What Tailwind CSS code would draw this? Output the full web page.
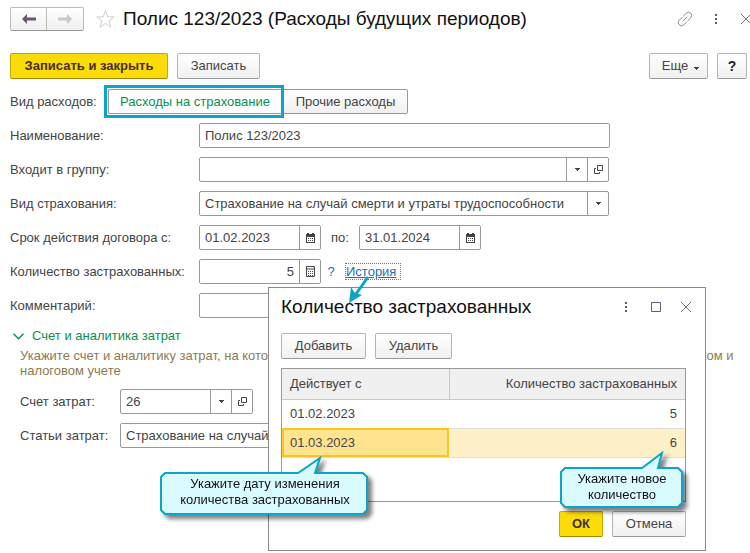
<!DOCTYPE html>
<html lang="ru">
<head>
    <meta charset="UTF-8">
    <meta name="viewport" content="width=device-width, initial-scale=1.0">
    <script src="https://cdn.jsdelivr.net/npm/@tailwindcss/browser@4"></script>
    <title>Полис 123/2023 (Расходы будущих периодов)</title>
</head>
<body class="relative min-h-screen overflow-hidden bg-white font-['Liberation_Sans',Arial,sans-serif] text-[13px] text-[#444]">

    <!-- Icons used more than once -->
    <svg class="hidden">
        <symbol id="caret" viewBox="0 0 5 3"><path d="M0 0h5v1h-1v1h-1v1h-1v-1h-1v-1h-1z" fill="#444"/></symbol>
        <symbol id="open" viewBox="0 0 9 9"><path d="M3.5 .5h5v5h-5zM2 3.5H.5v5h5V7" fill="none" stroke="#444"/></symbol>
        <symbol id="calendar" viewBox="0 0 9 10">
            <path d="M0 1h1V0h2v1h3V0h2v1h1v9H0z" fill="#444"/>
            <path d="M1 4h7v5H1z" fill="#fff"/>
            <path d="M2 5.5h5M2 7.5h5" stroke="#444" stroke-dasharray="1 1"/>
        </symbol>
        <symbol id="dots" viewBox="0 0 2 10"><path d="M0 0h2v2H0zM0 4h2v2H0zM0 8h2v2H0z" fill="#6b5577"/></symbol>
        <symbol id="close" viewBox="0 0 10 10"><path d="M0 0l10 10M10 0L0 10" fill="none" stroke="#777"/></symbol>
    </svg>

    <!-- Title bar -->
    <header class="flex h-6 items-center mt-[7px] pl-[10px]">
        <div class="flex h-6 shrink-0 rounded-xs border border-[#bbb] border-b-[#999] bg-linear-to-b from-white to-[#f0f0f0]">
            <button class="flex w-9 items-center justify-center border-r border-[#bbb]" aria-label="Назад">
                <svg class="h-[10px] w-[14px]" viewBox="0 0 14 10"><path d="M5 0L0 5l5 5V6.500h9v-3H5z" fill="#6b5577"/></svg>
            </button>
            <button class="flex w-9 items-center justify-center" aria-label="Вперед">
                <svg class="h-[10px] w-[14px]" viewBox="0 0 14 10"><path d="M9 0l5 5-5 5V6.500H0v-3h9z" fill="#c8c8c8"/></svg>
            </button>
        </div>
        <button class="ml-3" aria-label="В избранное">
            <svg class="h-5 w-[19px]" viewBox="0 0 19 20"><path d="M9.500 1.500l2.200 6.300h6.500l-5.200 4 1.900 6.500-5.400-4-5.400 4L6 11.800l-5.200-4h6.500z" fill="none" stroke="#d0d0d0"/></svg>
        </button>
        <h1 class="ml-2 flex-1 text-[19px] leading-6 whitespace-nowrap text-[#111]">Полис 123/2023 (Расходы будущих периодов)</h1>
        <button class="mr-[22px]" aria-label="Получить ссылку">
            <svg class="h-4 w-4" viewBox="0 0 16 16" fill="none" stroke="#888" stroke-linecap="round">
                <path d="M6.500 5l3-3a3.200 3.200 0 0 1 4.500 4.500l-3 3M9.500 11l-3 3A3.200 3.200 0 0 1 2 9.500l3-3M6 10l4-4"/>
            </svg>
        </button>
        <button class="mr-6" aria-label="Меню"><svg class="h-[10px] w-[2px]"><use href="#dots"/></svg></button>
        <button class="-mr-px" aria-label="Закрыть"><svg class="h-[10px] w-[10px]"><use href="#close"/></svg></button>
    </header>

    <!-- Commands -->
    <div class="mt-[22px] flex h-[26px] gap-[9px] pr-[3px] pl-[10px]">
        <button class="w-[158px] rounded-xs border border-[#c8a800] border-b-[#a08600] bg-[#fbdc08] font-bold text-[#4a2c2c]">Записать и закрыть</button>
        <button class="w-[83px] rounded-xs border border-[#b4b4b4] border-b-[#999] bg-linear-to-b from-white to-[#f0f0f0]">Записать</button>
        <button class="ml-auto flex w-[59px] items-center justify-center gap-[6px] rounded-xs border border-[#b4b4b4] border-b-[#999] bg-linear-to-b from-white to-[#f0f0f0] pl-1">Еще <svg class="mt-1 h-[3px] w-[5px]"><use href="#caret"/></svg></button>
        <button class="w-[30px] rounded-xs border border-[#b4b4b4] border-b-[#999] bg-linear-to-b from-white to-[#f0f0f0] text-sm font-bold text-[#222]">?</button>
    </div>

    <main class="mt-[6px] pl-[10px]">
        <!-- Expense kind -->
        <fieldset class="flex items-center" aria-label="Вид расходов">
            <span class="w-[94px]">Вид расходов:</span>
            <div class="flex h-[33px] w-[180px] border-3 border-[#0aa5c7]">
                <label class="my-px ml-px flex flex-1 items-center justify-center rounded-l-xs border border-r-0 border-[#999] whitespace-nowrap text-[#0a8f50]">
                    <input class="sr-only" type="radio" name="kind" checked>Расходы на страхование
                </label>
            </div>
            <label class="flex h-[25px] w-[124px] items-center justify-center rounded-r-xs border border-l-0 border-[#999] bg-linear-to-b from-white to-[#f0f0f0] whitespace-nowrap">
                <input class="sr-only" type="radio" name="kind">Прочие расходы
            </label>
        </fieldset>

        <!-- Policy fields -->
        <div class="mt-[5px] grid grid-cols-[189px_minmax(0,411px)] items-center gap-y-[9px]">
            <label for="name">Наименование:</label>
            <input id="name" class="h-[25px] rounded-xs border border-[#999] px-[5px]" type="text" value="Полис 123/2023">

            <label for="group">Входит в группу:</label>
            <div class="mr-px flex h-[25px] rounded-xs border border-[#999]">
                <select id="group" class="min-w-0 flex-1 appearance-none px-[5px]"><option></option></select>
                <span class="pointer-events-none flex w-[21px] items-center justify-center border-l border-[#999]"><svg class="h-[3px] w-[5px]"><use href="#caret"/></svg></span>
                <button class="flex w-[21px] items-center justify-center border-l border-[#999]" aria-label="Открыть группу"><svg class="h-[9px] w-[9px]"><use href="#open"/></svg></button>
            </div>

            <label for="insurance">Вид страхования:</label>
            <div class="mr-px flex h-[25px] rounded-xs border border-[#999]">
                <select id="insurance" class="min-w-0 flex-1 appearance-none px-[5px]"><option>Страхование на случай смерти и утраты трудоспособности</option></select>
                <span class="pointer-events-none flex w-[21px] items-center justify-center border-l border-[#999]"><svg class="h-[3px] w-[5px]"><use href="#caret"/></svg></span>
            </div>

            <label for="from">Срок действия договора с:</label>
            <div class="flex items-center">
                <div class="flex h-[25px] w-[122px] rounded-xs border border-[#999]">
                    <input id="from" class="min-w-0 flex-1 px-[5px]" type="text" value="01.02.2023">
                    <button class="flex w-[21px] items-center justify-center border-l border-[#999]" aria-label="Выбрать дату начала"><svg class="h-[10px] w-[9px]"><use href="#calendar"/></svg></button>
                </div>
                <label for="to" class="w-[38px] pl-[10px]">по:</label>
                <div class="flex h-[25px] w-[122px] rounded-xs border border-[#999]">
                    <input id="to" class="min-w-0 flex-1 px-[5px]" type="text" value="31.01.2024">
                    <button class="flex w-[21px] items-center justify-center border-l border-[#999]" aria-label="Выбрать дату окончания"><svg class="h-[10px] w-[9px]"><use href="#calendar"/></svg></button>
                </div>
            </div>

            <label for="count">Количество застрахованных:</label>
            <div class="flex items-center">
                <div class="flex h-[25px] w-[122px] rounded-xs border border-[#999]">
                    <input id="count" class="min-w-0 flex-1 px-[5px] text-right" type="text" value="5">
                    <button class="flex w-[21px] items-center justify-center border-l border-[#999]" aria-label="Калькулятор">
                        <svg class="h-[11px] w-[9px]" viewBox="0 0 9 11"><path d="M.5 .5h8v10h-8zM1 3h7" fill="none" stroke="#444"/><path d="M2 5.500h5M2 7.500h5M2 9.500h5" stroke="#444" stroke-dasharray="1 1"/></svg>
                    </button>
                </div>
                <button class="w-5 text-[#1c6fb5]">?</button>
                <a class="ml-1 border border-dotted border-[#777] pr-1 leading-[15px] text-[#1c6fb5] underline" href="#history">История</a>
            </div>

            <label for="comment">Комментарий:</label>
            <input id="comment" class="h-[25px] rounded-xs border border-[#999] px-[5px]" type="text">
        </div>

        <!-- Account and cost analytics -->
        <section>
            <h2 class="mt-2 leading-5 text-[#0a8f50]">
                <button class="flex items-center gap-2 pl-[3px]" aria-expanded="true">
                    <svg class="h-[7px] w-[11px]" viewBox="0 0 11 7"><path d="M.5 .8l5 5 5-5" fill="none" stroke="#0a8f50" stroke-width="1.500"/></svg>
                    Счет и аналитика затрат
                </button>
            </h2>
            <p class="ml-[10px] mt-[2px] leading-[15px] whitespace-nowrap text-[#8c7a50]">Укажите счет и аналитику затрат, на которые будут относиться данные расходы будущих периодов в бухгалтерском и<br>налоговом учете</p>
            <div class="mt-[11px] ml-[10px] grid grid-cols-[100px_1fr] items-center gap-y-[9px]">
                <label for="account">Счет затрат:</label>
                <div class="flex h-[25px] w-[133px] rounded-xs border border-[#999]">
                    <select id="account" class="min-w-0 flex-1 appearance-none px-[5px]"><option>26</option></select>
                    <span class="pointer-events-none flex w-[21px] items-center justify-center border-l border-[#999]"><svg class="h-[3px] w-[5px]"><use href="#caret"/></svg></span>
                    <button class="flex w-[21px] items-center justify-center border-l border-[#999]" aria-label="Открыть счет"><svg class="h-[9px] w-[9px]"><use href="#open"/></svg></button>
                </div>
                <label for="item">Статьи затрат:</label>
                <input id="item" class="h-[25px] max-w-[480px] rounded-xs border border-[#999] px-[5px]" type="text" value="Страхование на случай смерти">
            </div>
        </section>
    </main>

    <!-- History dialog -->
    <div id="history" role="dialog" aria-labelledby="history-title" class="absolute top-[287px] left-[268px] w-[438px] border border-[#888] bg-white px-3 pb-[13px]">
        <div class="mt-[7px] flex h-6 items-center pr-[2px]">
            <h2 id="history-title" class="flex-1 text-[19px] leading-6 whitespace-nowrap text-[#111]">Количество застрахованных</h2>
            <button class="mr-6" aria-label="Меню"><svg class="h-[10px] w-[2px]"><use href="#dots"/></svg></button>
            <button class="mr-5" aria-label="Развернуть"><svg class="h-[10px] w-[10px]" viewBox="0 0 10 10"><path d="M.5 .5h9v9h-9z" fill="none" stroke="#6b5577"/></svg></button>
            <button aria-label="Закрыть"><svg class="h-[10px] w-[10px]"><use href="#close"/></svg></button>
        </div>
        <div class="mt-[14px] flex h-[26px] gap-[9px]">
            <button class="w-[85px] rounded-xs border border-[#b4b4b4] border-b-[#999] bg-linear-to-b from-white to-[#f0f0f0]">Добавить</button>
            <button class="w-[77px] rounded-xs border border-[#b4b4b4] border-b-[#999] bg-linear-to-b from-white to-[#f0f0f0]">Удалить</button>
        </div>
        <div class="mt-[9px] mr-[7px] h-[134px] border border-[#999]">
            <table class="w-full table-fixed border-collapse">
                <thead>
                    <tr class="h-[30px] border-b border-[#c8c8c8] bg-[#f0f0f0]">
                        <th class="w-[167px] border-r border-[#c8c8c8] px-2 text-left font-normal">Действует с</th>
                        <th class="px-2 text-right font-normal">Количество застрахованных</th>
                    </tr>
                </thead>
                <tbody>
                    <tr class="h-[29px] border-b border-[#ddd]">
                        <td class="px-2">01.02.2023</td>
                        <td class="px-2 text-right">5</td>
                    </tr>
                    <tr class="h-[29px] border-b border-[#ddd] bg-[#fef1c8]">
                        <td class="bg-[#ffe48f] px-2 outline-2 -outline-offset-2 outline-[#f7c81e]">01.03.2023</td>
                        <td class="px-2 text-right">6</td>
                    </tr>
                </tbody>
            </table>
        </div>
        <div class="mt-[9px] mr-[7px] flex h-[26px] justify-end gap-[9px]">
            <button class="w-[44px] rounded-xs border border-[#c8a800] border-b-[#a08600] bg-[#fbdc08] font-bold text-[#4a2c2c]">ОК</button>
            <button class="w-[74px] rounded-xs border border-[#b4b4b4] border-b-[#999] bg-linear-to-b from-white to-[#f0f0f0]">Отмена</button>
        </div>

        <!-- Callouts -->
        <div class="absolute top-[168px] left-[-109px] h-[60px] w-[210px] drop-shadow-[4px_4px_2px_rgba(0,0,0,0.5)]">
            <svg class="h-[60px] w-[210px]" viewBox="0 0 210 60"><path d="M5 17H138L160 2 155 17H203Q205 19 207 21V54Q205 56 203 58H5Q3 56 1 54V21Q3 19 5 17z" fill="#d9faff" stroke="#0aa5c7" stroke-width="2"/></svg>
            <p class="absolute inset-x-0 top-5 text-center leading-4 text-[#111]">Укажите дату изменения<br>количества застрахованных</p>
        </div>
        <div class="absolute top-[163px] left-[291px] h-[58px] w-[124px] drop-shadow-[4px_4px_2px_rgba(0,0,0,0.5)]">
            <svg class="h-[58px] w-[124px]" viewBox="0 0 124 58"><path d="M5 17H82L102 2 98 17H118Q120 19 122 21V52Q120 54 118 56H5Q3 54 1 52V21Q3 19 5 17z" fill="#d9faff" stroke="#0aa5c7" stroke-width="2"/></svg>
            <p class="absolute inset-x-0 top-5 text-center leading-4 text-[#111]">Укажите новое<br>количество</p>
        </div>
    </div>

    <!-- Arrow from the link to the dialog -->
    <svg class="pointer-events-none absolute top-[274px] left-[346px] h-8 w-7" viewBox="0 0 28 32"><path d="M22 3L10 20" stroke="#0aa5c7" stroke-width="3"/><path d="M3 29L5 13l3.500 5.500L16 21z" fill="#0aa5c7"/></svg>

</body>
</html>
